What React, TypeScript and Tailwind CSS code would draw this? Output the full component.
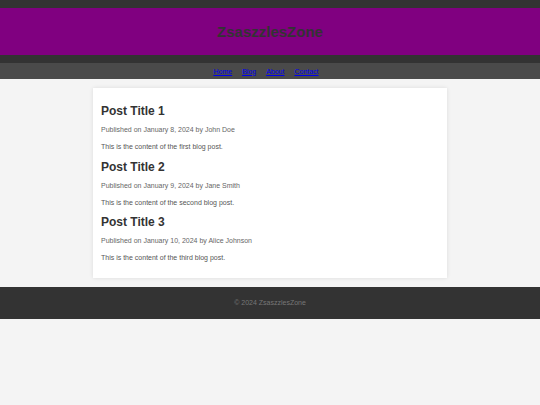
export default function App() {
  const posts = [
    { title: 'Post Title 1', meta: 'Published on January 8, 2024 by John Doe', body: 'This is the content of the first blog post.' },
    { title: 'Post Title 2', meta: 'Published on January 9, 2024 by Jane Smith', body: 'This is the content of the second blog post.' },
    { title: 'Post Title 3', meta: 'Published on January 10, 2024 by Alice Johnson', body: 'This is the content of the third blog post.' },
  ];

  return (
    <div className="min-h-[405px] bg-[#f4f4f4] font-['Liberation_Sans',Arial,sans-serif] text-[#333]">
      {/* Header */}
      <header className="bg-[#333] py-[8px]">
        <div className="bg-[#800080] h-[47px] flex items-center justify-center pb-[1px]">
          <h1 className="text-[15px] font-bold text-[#333] leading-none">ZsaszzlesZone</h1>
        </div>
      </header>

      {/* Nav */}
      <nav className="bg-[#4a4a4a] h-[16px] flex items-center justify-center gap-[10px] pr-[8px] text-[7px] leading-none">
        <a href="#" className="text-[#0000ee] underline">Home</a>
        <a href="#" className="text-[#0000ee] underline">Blog</a>
        <a href="#" className="text-[#0000ee] underline">About</a>
        <a href="#" className="text-[#0000ee] underline">Contact</a>
      </nav>

      {/* Main */}
      <main className="py-[9px]">
        <div className="mx-auto w-[354px] bg-white shadow-[0_0_4px_rgba(0,0,0,0.1)] px-[8px] pt-[16px] pb-[14.5px] flex flex-col gap-[7.5px]">
          {posts.map((post) => (
            <article key={post.title} className="flex flex-col">
              <h2 className="text-[12px] font-bold leading-[14px] text-[#333]">{post.title}</h2>
              <p className="mt-[7px] text-[7px] leading-[10px] text-[#666]">{post.meta}</p>
              <p className="mt-[7px] text-[7px] leading-[10px] text-[#555]">{post.body}</p>
            </article>
          ))}
        </div>
      </main>

      {/* Footer */}
      <footer className="bg-[#333] h-[32px] flex items-center justify-center">
        <p className="text-[7px] text-[#777] leading-none">© 2024 ZsaszzlesZone</p>
      </footer>
    </div>
  );
}
